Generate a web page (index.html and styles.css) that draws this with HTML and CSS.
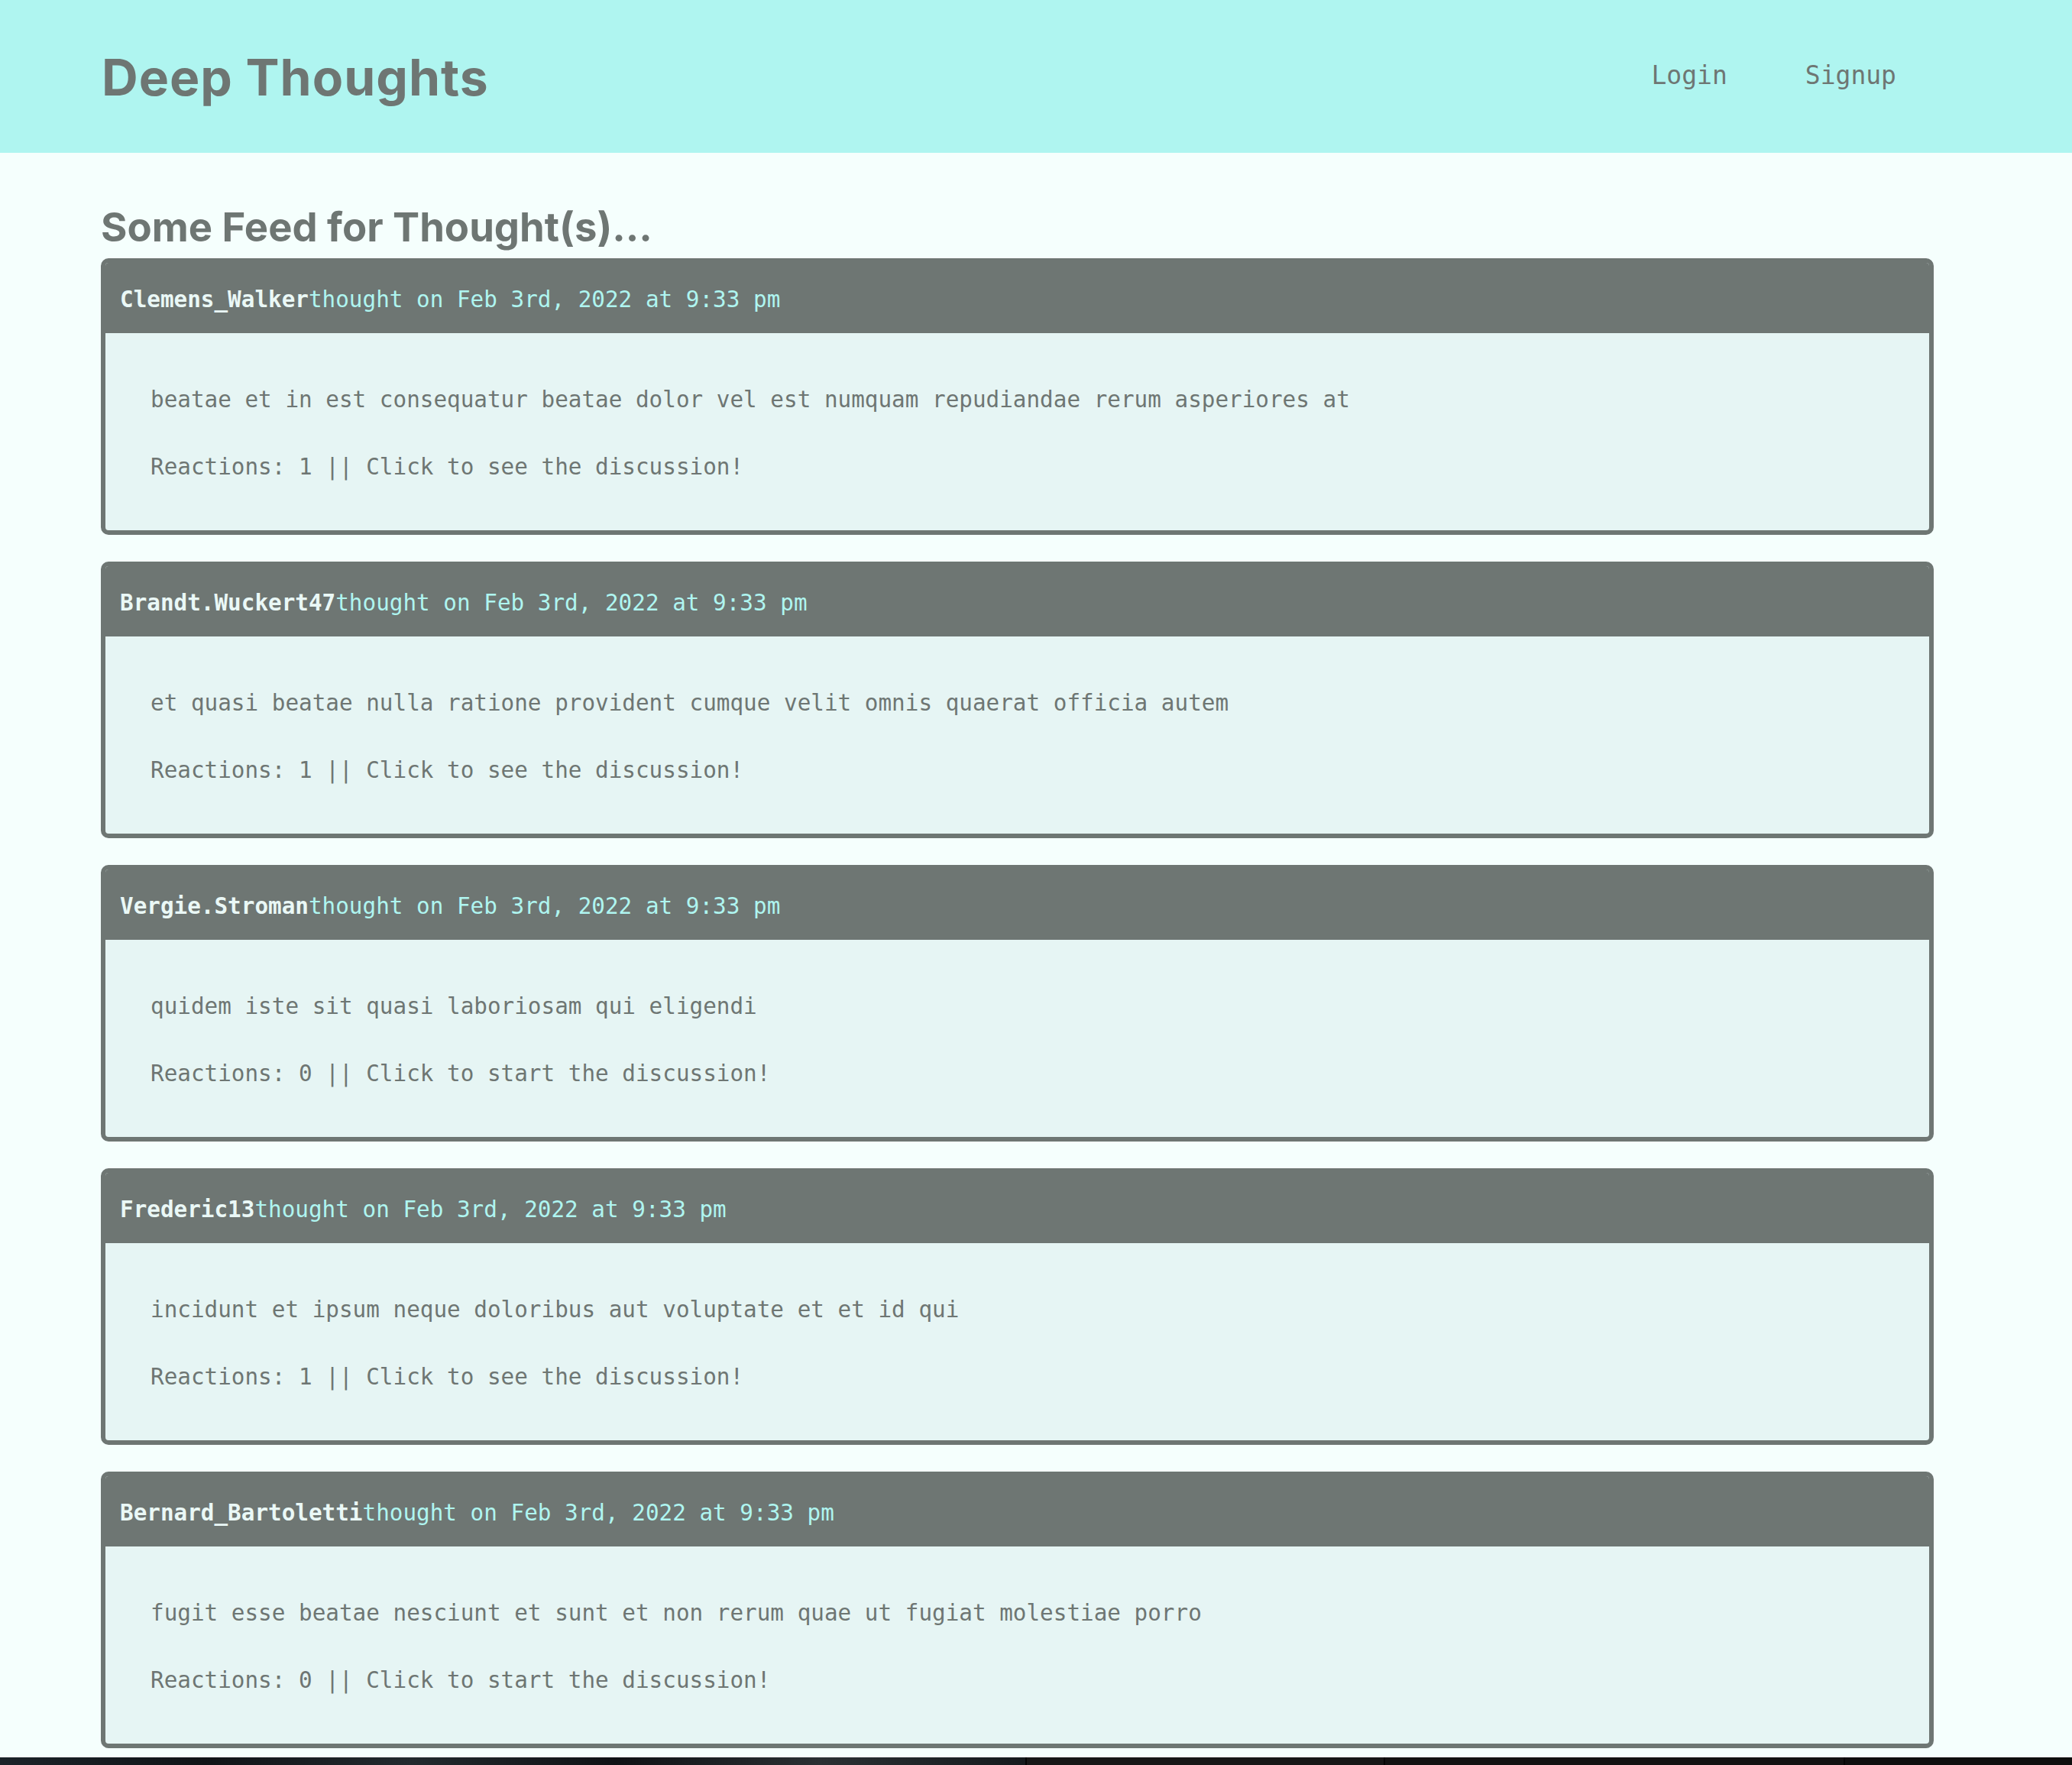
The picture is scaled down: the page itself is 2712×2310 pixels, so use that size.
FILE: index.html
```html
<!DOCTYPE html>
<html lang="en">
<head>
<meta charset="utf-8">
<title>Deep Thoughts</title>
<link rel="stylesheet" href="styles.css">
</head>
<body>
<header class="topbar">
  <div class="topbar-inner">
    <h1 class="brand">Deep Thoughts</h1>
    <nav class="nav">
      <a class="nav-link" href="#">Login</a>
      <a class="nav-link" href="#">Signup</a>
    </nav>
  </div>
</header>
<main class="main">
  <h3 class="feed-title">Some Feed for Thought(s)...</h3>
  <div class="card">
    <p class="card-header"><span class="user">Clemens_Walker</span>thought on Feb 3rd, 2022 at 9:33 pm</p>
    <div class="card-body">
      <p>beatae et in est consequatur beatae dolor vel est numquam repudiandae rerum asperiores at</p>
      <p>Reactions: 1 || Click to see the discussion!</p>
    </div>
  </div>
  <div class="card">
    <p class="card-header"><span class="user">Brandt.Wuckert47</span>thought on Feb 3rd, 2022 at 9:33 pm</p>
    <div class="card-body">
      <p>et quasi beatae nulla ratione provident cumque velit omnis quaerat officia autem</p>
      <p>Reactions: 1 || Click to see the discussion!</p>
    </div>
  </div>
  <div class="card">
    <p class="card-header"><span class="user">Vergie.Stroman</span>thought on Feb 3rd, 2022 at 9:33 pm</p>
    <div class="card-body">
      <p>quidem iste sit quasi laboriosam qui eligendi</p>
      <p>Reactions: 0 || Click to start the discussion!</p>
    </div>
  </div>
  <div class="card">
    <p class="card-header"><span class="user">Frederic13</span>thought on Feb 3rd, 2022 at 9:33 pm</p>
    <div class="card-body">
      <p>incidunt et ipsum neque doloribus aut voluptate et et id qui</p>
      <p>Reactions: 1 || Click to see the discussion!</p>
    </div>
  </div>
  <div class="card">
    <p class="card-header"><span class="user">Bernard_Bartoletti</span>thought on Feb 3rd, 2022 at 9:33 pm</p>
    <div class="card-body">
      <p>fugit esse beatae nesciunt et sunt et non rerum quae ut fugiat molestiae porro</p>
      <p>Reactions: 0 || Click to start the discussion!</p>
    </div>
  </div>
</main>
<div class="taskbar">
  <span class="tb-seg tb-img"></span>
  <span class="tb-seg tb-a"></span>
  <span class="tb-seg tb-b"></span>
  <span class="tb-seg tb-c"></span>
</div>
</body>
</html>
```
FILE: styles.css
```css
html, body {
  margin: 0;
  padding: 0;
}

body {
  background: #f5fffd;
  color: #6e7673;
  font-family: "DejaVu Sans Mono", "Liberation Mono", monospace;
  font-size: 29.3px;
  line-height: 36px;
  height: 2310px;
  overflow: hidden;
}

.topbar {
  background: #aff5f0;
  height: 200px;
}

.topbar-inner {
  height: 100%;
  display: flex;
  align-items: center;
  justify-content: space-between;
  padding: 0 230px 0 133px;
}

.brand {
  margin: 0;
  font-family: "Inter", "Lato", sans-serif;
  font-weight: 700;
  font-size: 66px;
  letter-spacing: 1px;
  line-height: 1;
  color: #6e7673;
  padding-top: 2px;
}

.nav {
  display: flex;
  gap: 102px;
  padding-bottom: 2px;
}

.nav-link {
  color: #6e7673;
  text-decoration: none;
  font-size: 33px;
}

.main {
  padding: 0 181px 0 132px;
}

.feed-title {
  margin: 0;
  padding-top: 69px;
  height: 69px;
  font-family: "Inter", "Lato", sans-serif;
  font-weight: 700;
  font-size: 52.6px;
  line-height: 56px;
  color: #6e7673;
}

.card {
  border: 6px solid #6e7673;
  border-radius: 10px;
  background: #e6f5f4;
  margin-bottom: 35px;
  overflow: hidden;
}

.card-header {
  margin: 0;
  background: #6e7673;
  color: #aff5f0;
  padding: 30px 19px 26px;
  line-height: 36px;
}

.user {
  color: #eaf8f6;
  font-weight: 700;
}

.card-body {
  padding: 69px 59px 65px;
}

.card-body p {
  margin: 0;
}

.card-body p + p {
  margin-top: 52px;
}

.taskbar {
  position: fixed;
  left: 0;
  right: 0;
  bottom: 0;
  height: 10px;
  display: flex;
  background: #0e0e0e;
}

.tb-seg {
  height: 100%;
}

.tb-img {
  width: 1342px;
  background: linear-gradient(90deg, #1b2329 0%, #101417 20%, #222a2e 40%, #0f1215 60%, #2a3033 80%, #151a1d 100%);
}

.tb-a {
  width: 467px;
  background: #171717;
  border-left: 2px solid #050505;
}

.tb-b {
  width: 600px;
  background: #121212;
  border-left: 2px solid #050505;
}

.tb-c {
  flex: 1;
  background: #0e0e0e;
  border-left: 2px solid #050505;
}
```
